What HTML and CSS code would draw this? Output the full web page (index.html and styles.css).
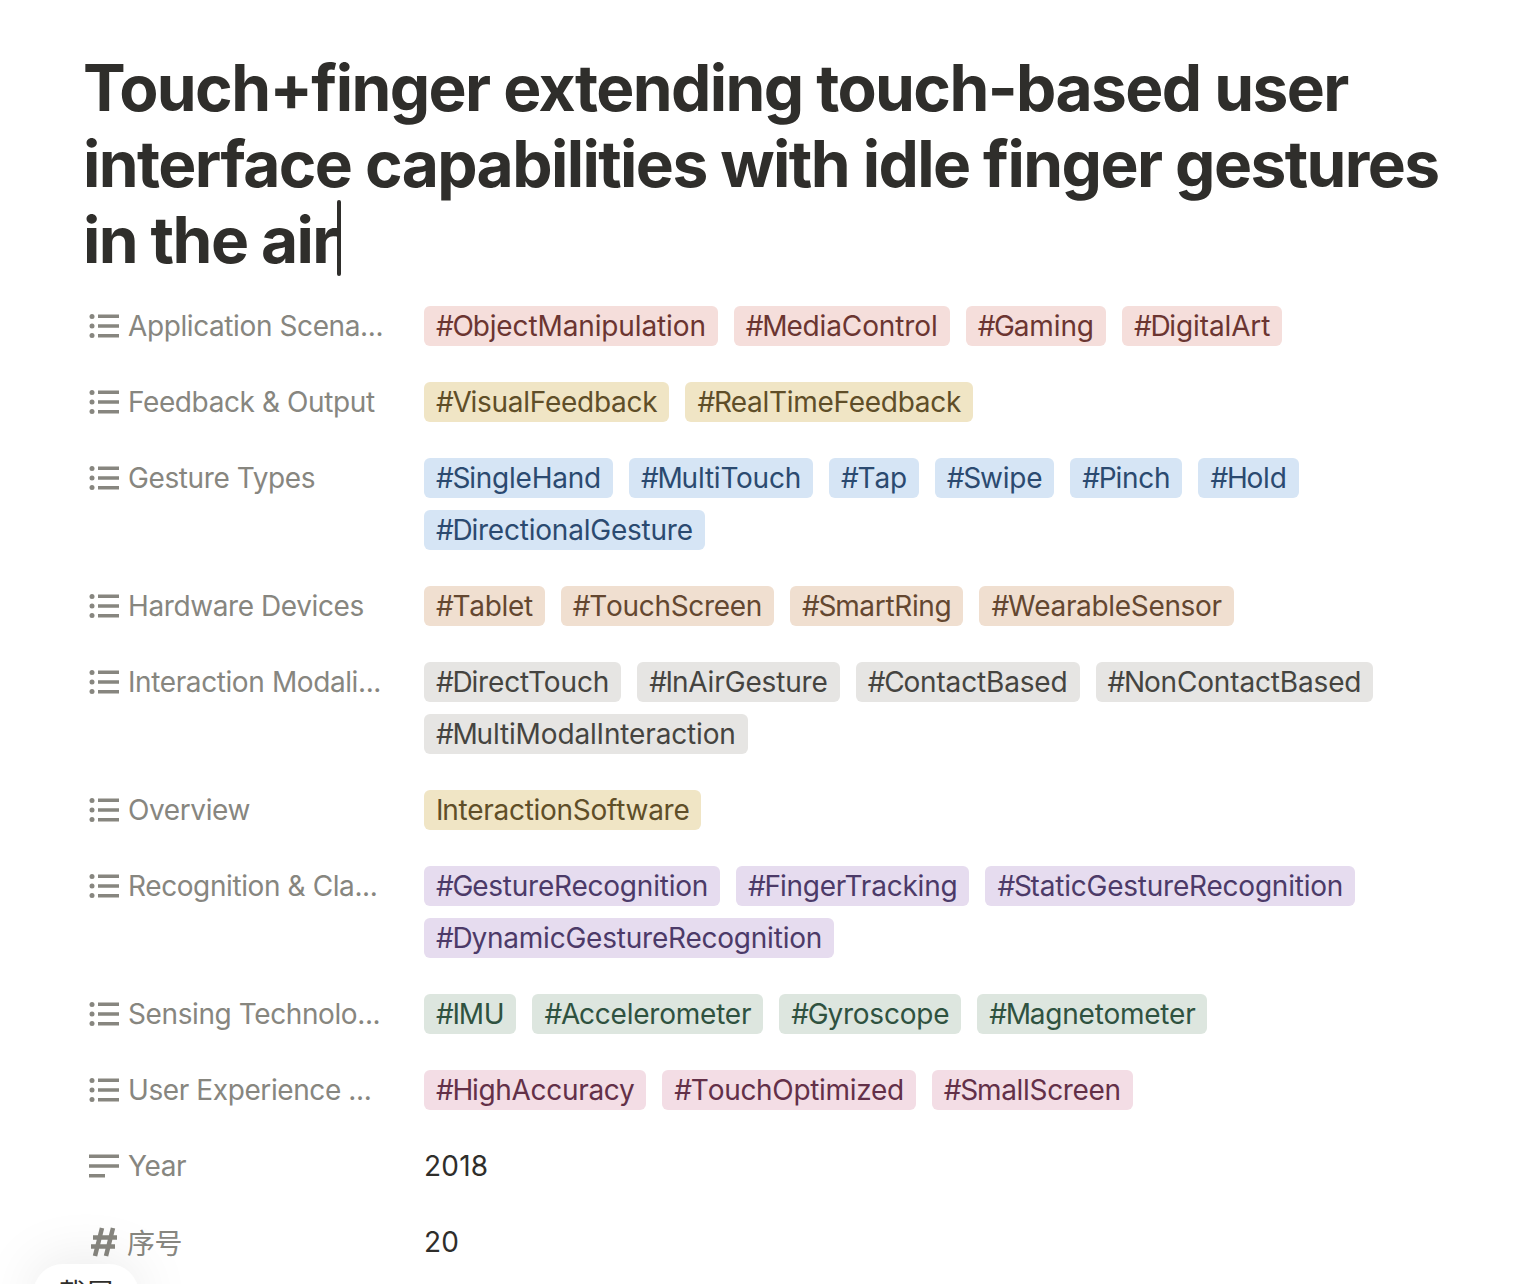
FILE: index.html
```html
<!DOCTYPE html>
<html lang="en">
<head>
  <meta charset="UTF-8">
  <title>Touch+finger</title>
  <link rel="stylesheet" href="styles.css">
</head>
<body>
  <svg class="defs" width="0" height="0">
    <symbol id="list" viewBox="0 0 30 24">
      <circle cx="3" cy="2.500" r="2.500"/><circle cx="3" cy="12" r="2.500"/><circle cx="3" cy="21.500" r="2.500"/>
      <rect x="9" y="0.500" width="21" height="3.500"/><rect x="9" y="10.250" width="21" height="3.500"/><rect x="9" y="20" width="21" height="3.500"/>
    </symbol>
    <symbol id="text" viewBox="0 0 30 24">
      <rect x="0" y="0.500" width="30" height="3.500"/><rect x="0" y="10.250" width="30" height="3.500"/><rect x="0" y="20" width="16" height="3.500"/>
    </symbol>
    <symbol id="number" viewBox="0 0 30 30">
      <path d="M13 1 L6 29 M24 1 L17 29 M4 10.500 H28 M2 19.500 H26" fill="none" stroke="#87867f" stroke-width="4.500"/>
    </symbol>
  </svg>

  <main class="page">
    <h1 class="title">Touch+finger extending touch-based user interface capabilities with idle finger gestures in the air<span class="caret"></span></h1>

    <div class="props">
      <div class="row">
        <div class="name"><svg class="icon"><use href="#list"/></svg><span>Application Scena...</span></div>
        <div class="tags red"><span class="tag">#ObjectManipulation</span><span class="tag">#MediaControl</span><span class="tag">#Gaming</span><span class="tag">#DigitalArt</span></div>
      </div>
      <div class="row">
        <div class="name"><svg class="icon"><use href="#list"/></svg><span>Feedback &amp; Output</span></div>
        <div class="tags yellow"><span class="tag">#VisualFeedback</span><span class="tag">#RealTimeFeedback</span></div>
      </div>
      <div class="row">
        <div class="name"><svg class="icon"><use href="#list"/></svg><span>Gesture Types</span></div>
        <div class="tags blue"><span class="tag">#SingleHand</span><span class="tag">#MultiTouch</span><span class="tag">#Tap</span><span class="tag">#Swipe</span><span class="tag">#Pinch</span><span class="tag">#Hold</span><span class="tag">#DirectionalGesture</span></div>
      </div>
      <div class="row">
        <div class="name"><svg class="icon"><use href="#list"/></svg><span>Hardware Devices</span></div>
        <div class="tags brown"><span class="tag">#Tablet</span><span class="tag">#TouchScreen</span><span class="tag">#SmartRing</span><span class="tag">#WearableSensor</span></div>
      </div>
      <div class="row">
        <div class="name"><svg class="icon"><use href="#list"/></svg><span>Interaction Modali...</span></div>
        <div class="tags gray"><span class="tag">#DirectTouch</span><span class="tag">#InAirGesture</span><span class="tag">#ContactBased</span><span class="tag">#NonContactBased</span><span class="tag">#MultiModalInteraction</span></div>
      </div>
      <div class="row">
        <div class="name"><svg class="icon"><use href="#list"/></svg><span>Overview</span></div>
        <div class="tags yellow"><span class="tag">InteractionSoftware</span></div>
      </div>
      <div class="row">
        <div class="name"><svg class="icon"><use href="#list"/></svg><span>Recognition &amp; Cla...</span></div>
        <div class="tags purple"><span class="tag">#GestureRecognition</span><span class="tag">#FingerTracking</span><span class="tag">#StaticGestureRecognition</span><span class="tag">#DynamicGestureRecognition</span></div>
      </div>
      <div class="row">
        <div class="name"><svg class="icon"><use href="#list"/></svg><span>Sensing Technolo...</span></div>
        <div class="tags green"><span class="tag">#IMU</span><span class="tag">#Accelerometer</span><span class="tag">#Gyroscope</span><span class="tag">#Magnetometer</span></div>
      </div>
      <div class="row">
        <div class="name"><svg class="icon"><use href="#list"/></svg><span>User Experience ...</span></div>
        <div class="tags pink"><span class="tag">#HighAccuracy</span><span class="tag">#TouchOptimized</span><span class="tag">#SmallScreen</span></div>
      </div>
      <div class="row">
        <div class="name"><svg class="icon"><use href="#text"/></svg><span>Year</span></div>
        <div class="value">2018</div>
      </div>
      <div class="row">
        <div class="name"><svg class="icon-num"><use href="#number"/></svg><span>序号</span></div>
        <div class="value">20</div>
      </div>
    </div>
  </main>

  <div class="shot">截屏</div>
</body>
</html>
```

FILE: styles.css
```css
* {
  box-sizing: border-box;
}

html, body {
  height: 100%;
}

body {
  margin: 0;
  background: #fff;
  color: #2f2e2b;
  font-family: Inter, "Noto Sans CJK SC", sans-serif;
  overflow: hidden;
}

.defs {
  display: block;
  height: 0;
}

.page {
  padding: 50px 60px 0 84px;
}

.title {
  margin: 0 -10px 28px -1px;
  font-size: 64px;
  line-height: 76px;
  font-weight: 700;
  letter-spacing: -1.58px;
  color: #2f2e2b;
}

/* text cursor, sits over the line so it doesn't change its height */
.caret {
  position: absolute;
  width: 4px;
  height: 76px;
  margin-top: -2px;
  background: #2f2e2b;
  border-radius: 2px;
}

.props {
  display: flex;
  flex-direction: column;
  gap: 36px;
}

.row {
  display: flex;
  align-items: flex-start;
}

.name {
  display: flex;
  align-items: center;
  flex: none;
  width: 340px;
  height: 40px;
  padding-left: 5px;
  gap: 9px;
  font-size: 28px;
  letter-spacing: -0.4px;
  color: #87867f;
  white-space: nowrap;
}

.icon {
  flex: none;
  width: 30px;
  height: 24px;
  fill: #87867f;
}

.icon-num {
  flex: none;
  width: 30px;
  height: 30px;
  margin: -1px -1px 0 0;
}

.tags {
  display: flex;
  flex-wrap: wrap;
  gap: 12px 16px;
  flex: 1;
}

.tag {
  height: 40px;
  padding: 0 12px;
  border-radius: 6px;
  font-size: 28px;
  line-height: 40px;
  letter-spacing: -0.22px;
  white-space: nowrap;
}

/* the # is a little narrower in the original */
.tag::first-letter {
  letter-spacing: -1.25px;
}

.value {
  height: 40px;
  font-size: 28px;
  line-height: 40px;
  letter-spacing: 0.2px;
  color: #2f2e2b;
}

.red .tag { background: #f5dedb; color: #6b3531; letter-spacing: -0.12px; }
.yellow .tag { background: #f0e5c5; color: #5f4e28; letter-spacing: -0.27px; }
.blue .tag { background: #d6e5f5; color: #2b4a70; }
.brown .tag { background: #f0dfd0; color: #644730; letter-spacing: -0.33px; }
.gray .tag { background: #e6e5e3; color: #454440; letter-spacing: -0.15px; }
.purple .tag { background: #e6dcef; color: #4c3a68; }
.green .tag { background: #dde6df; color: #2f5240; }
.pink .tag { background: #f3dde5; color: #633048; letter-spacing: -0.32px; }

.shot {
  position: absolute;
  left: 33px;
  top: 1264px;
  width: 106px;
  height: 60px;
  padding-top: 8px;
  border-radius: 30px;
  background: #fff;
  box-shadow: 0 0 60px rgba(0, 0, 0, 0.1);
  text-align: center;
  font-size: 28px;
  color: #2f2e2b;
}
```
